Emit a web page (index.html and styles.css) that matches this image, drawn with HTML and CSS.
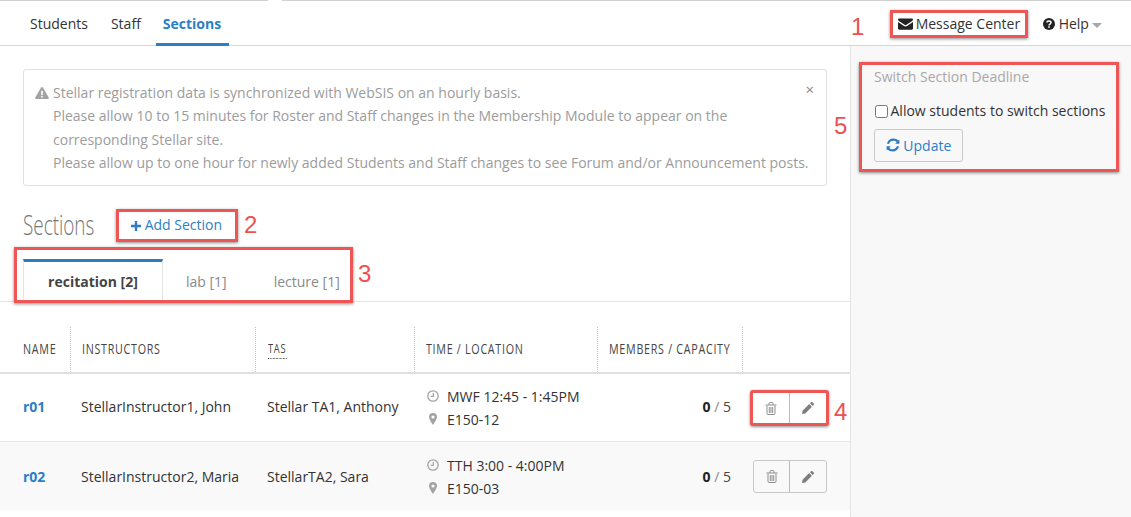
FILE: index.html
```html
<!DOCTYPE html>
<html lang="en">
<head>
<meta charset="utf-8">
<title>Sections</title>
<link rel="stylesheet" href="styles.css">
</head>
<body>
<div class="topline"><span class="gap"></span></div>
<header class="topbar">
  <nav class="nav">
    <a class="nav-item">Students</a>
    <a class="nav-item">Staff</a>
    <a class="nav-item active">Sections</a>
  </nav>
  <div class="nav-right">
    <span class="num">1</span>
    <a class="msg marked">
      <svg class="ico" viewBox="0 0 16 12" width="15" height="12"><path fill="#222" d="M0 1.2C0 .5.6 0 1.3 0h13.4c.7 0 1.3.5 1.3 1.2 0 .6-.4 1.1-.9 1.5L9 6.9c-.6.4-1.4.4-2 0L.9 2.7C.4 2.3 0 1.8 0 1.2zM0 3.9l6.4 4.3c1 .6 2.2.6 3.2 0L16 3.9v6.8c0 .7-.6 1.3-1.3 1.3H1.3C.6 12 0 11.4 0 10.7z"/></svg>
      Message Center
    </a>
    <a class="help">
      <svg class="ico" viewBox="0 0 12 12" width="12" height="12"><circle cx="6" cy="6" r="6" fill="#222"/><path fill="none" stroke="#fff" stroke-width="1.5" d="M4 4.6C4 3.5 4.9 3 6 3s2 .6 2 1.6c0 1.500-2 1.400-2 2.900"/><rect x="5.200" y="8.300" width="1.600" height="1.500" fill="#fff"/></svg>
      Help<span class="caret"></span>
    </a>
  </div>
</header>
<div class="layout">
  <main class="content">
    <div class="alert">
      <span class="close">×</span>
      <svg class="warn" viewBox="0 0 14 12" width="14" height="12"><path fill="#a3a3a3" d="M7 0c.4 0 .7.2.9.5l6 10.200c.3.600-.1 1.300-.9 1.300H1c-.8 0-1.200-.7-.9-1.300L6.100.5C6.300.2 6.600 0 7 0z"/><rect x="6.200" y="3.800" width="1.600" height="4.200" fill="#fff"/><rect x="6.200" y="8.900" width="1.600" height="1.600" fill="#fff"/></svg>
      <p>Stellar registration data is synchronized with WebSIS on an hourly basis.</p>
      <p>Please allow 10 to 15 minutes for Roster and Staff changes in the Membership Module to appear on the corresponding Stellar site.</p>
      <p>Please allow up to one hour for newly added Students and Staff changes to see Forum and/or Announcement posts.</p>
    </div>
    <div class="heading">
      <h1>Sections</h1>
      <a class="add marked">
        <svg class="ico" viewBox="0 0 10 10" width="10" height="10"><path fill="#2b7cc4" d="M3.800 0h2.400v3.800H10v2.400H6.200V10H3.800V6.200H0V3.800h3.800z"/></svg>
        Add Section
      </a>
      <span class="num num2">2</span>
    </div>
    <div class="tabs">
      <div class="tabs-mark">
        <a class="tab active">recitation [2]</a>
        <a class="tab lab">lab [1]</a>
        <a class="tab lecture">lecture [1]</a>
      </div>
      <span class="num num3">3</span>
    </div>
    <table class="grid">
      <colgroup><col class="c1"><col class="c2"><col class="c3"><col class="c4"><col class="c5"><col class="c6"></colgroup>
      <thead>
        <tr>
          <th class="first"><span class="narrow">NAME</span></th>
          <th class="col2"><span class="narrow">INSTRUCTORS</span></th>
          <th class="col3"><span class="narrow abbr">TAS</span></th>
          <th class="col4"><span class="narrow">TIME / LOCATION</span></th>
          <th class="col5"><span class="narrow">MEMBERS / CAPACITY</span></th>
          <th></th>
        </tr>
      </thead>
      <tbody>
        <tr>
          <td class="first"><a class="link">r01</a></td>
          <td class="col2">StellarInstructor1, John</td>
          <td class="col3">Stellar TA1, Anthony</td>
          <td class="col4">
            <div class="tl"><svg class="clock" viewBox="0 0 12 12" width="12" height="12"><circle cx="6" cy="6" r="5.200" fill="none" stroke="#a3a3a3" stroke-width="1.300"/><path fill="none" stroke="#a3a3a3" stroke-width="1.200" d="M6.300 3v3.400H3.700"/></svg>MWF 12:45 - 1:45PM</div>
            <div class="tl"><svg class="pin" viewBox="0 0 8 12" width="8" height="12"><path fill="#a3a3a3" fill-rule="evenodd" d="M4 0a4 4 0 0 1 4 4c0 1.600-2.400 5.800-4 8C2.400 9.800 0 5.600 0 4a4 4 0 0 1 4-4zm0 2.400a1.600 1.600 0 1 0 0 3.200 1.600 1.600 0 0 0 0-3.200z"/></svg>E150-12</div>
          </td>
          <td class="cap"><b>0</b> <i>/</i> 5</td>
          <td class="acts">
            <div class="btns marked">
              <a class="btn"><svg viewBox="0 0 12 13" width="12" height="13"><path fill="none" stroke="#8f8f8f" d="M2 3.500v8c0 .6.400 1 1 1h6c.6 0 1-.4 1-1v-8M.5 3h11M4 3V1.500c0-.5.300-1 1-1h2c.7 0 1 .500 1 1V3M4.300 5v6M6 5v6M7.700 5v6"/></svg></a>
              <a class="btn"><svg viewBox="0 0 12 12" width="12" height="12"><path fill="#7d7d7d" d="M9 .3c.4-.4 1-.4 1.400 0l1.300 1.300c.4.400.4 1 0 1.400l-1 1L8 1.300zM7.200 2.100L9.900 4.800 3.300 11.400 0 12l.6-3.300z"/></svg></a>
            </div>
            <span class="num num4">4</span>
          </td>
        </tr>
        <tr class="alt">
          <td class="first"><a class="link">r02</a></td>
          <td class="col2">StellarInstructor2, Maria</td>
          <td class="col3">StellarTA2, Sara</td>
          <td class="col4">
            <div class="tl"><svg class="clock" viewBox="0 0 12 12" width="12" height="12"><circle cx="6" cy="6" r="5.200" fill="none" stroke="#a3a3a3" stroke-width="1.300"/><path fill="none" stroke="#a3a3a3" stroke-width="1.200" d="M6.300 3v3.400H3.700"/></svg>TTH 3:00 - 4:00PM</div>
            <div class="tl"><svg class="pin" viewBox="0 0 8 12" width="8" height="12"><path fill="#a3a3a3" fill-rule="evenodd" d="M4 0a4 4 0 0 1 4 4c0 1.600-2.400 5.800-4 8C2.400 9.800 0 5.600 0 4a4 4 0 0 1 4-4zm0 2.400a1.600 1.600 0 1 0 0 3.200 1.600 1.600 0 0 0 0-3.200z"/></svg>E150-03</div>
          </td>
          <td class="cap"><b>0</b> <i>/</i> 5</td>
          <td class="acts">
            <div class="btns outlined">
              <a class="btn"><svg viewBox="0 0 12 13" width="12" height="13"><path fill="none" stroke="#8f8f8f" d="M2 3.500v8c0 .6.400 1 1 1h6c.6 0 1-.4 1-1v-8M.5 3h11M4 3V1.500c0-.5.300-1 1-1h2c.7 0 1 .500 1 1V3M4.300 5v6M6 5v6M7.700 5v6"/></svg></a>
              <a class="btn"><svg viewBox="0 0 12 12" width="12" height="12"><path fill="#7d7d7d" d="M9 .3c.4-.4 1-.4 1.400 0l1.300 1.300c.4.400.4 1 0 1.400l-1 1L8 1.300zM7.200 2.100L9.900 4.800 3.300 11.400 0 12l.6-3.300z"/></svg></a>
            </div>
          </td>
        </tr>
      </tbody>
    </table>
  </main>
  <aside class="side">
    <span class="num num5">5</span>
    <div class="panel marked">
      <h2>Switch Section Deadline</h2>
      <label class="check"><input type="checkbox"> Allow students to switch sections</label>
      <button class="update" type="button">
        <svg class="ico" viewBox="0 0 14 14" width="14" height="14"><path fill="#2b7cc4" d="M13.400 5.700H9.200l1.600-1.600C9.900 3.300 8.700 2.800 7.300 2.800c-2 0-3.700 1.200-4.300 3.100L.9 5.400C1.800 2.300 4.400.4 7.300.4c2.100 0 3.900.8 5.200 2L13.400 1.500zM.6 8.300h4.200L3.200 9.900c.9.800 2.100 1.300 3.500 1.300 2 0 3.700-1.200 4.300-3.100l2.100.5c-.9 3.100-3.500 5-6.400 5-2.100 0-3.900-.8-5.200-2L.6 12.500z"/></svg>
        Update
      </button>
    </div>
  </aside>
</div>
</body>
</html>
```
FILE: styles.css
```css
* { box-sizing: border-box; }
html, body { margin: 0; padding: 0; }
body {
  width: 1131px;
  height: 517px;
  overflow: hidden;
  background: #fff;
  color: #333;
  font-family: "Open Sans", "Liberation Sans", sans-serif;
  font-size: 14px;
  line-height: 20px;
}
a { color: inherit; text-decoration: none; }

.topline { height: 1px; background: #d0d0d0; display: flex; padding-left: 268px; }
.gap { width: 14px; background: #fff; }

.topbar {
  height: 45px;
  border-bottom: 1px solid #d6d6d6;
  display: flex;
  justify-content: space-between;
  padding-left: 19px;
}
.nav { display: flex; height: 45px; }
.nav-item { padding: 13px 11px 0; height: 45px; color: #333; }
.nav-item:first-child { padding-right: 12px; }
.nav-item.active { color: #2b7fc7; font-weight: 700; border-bottom: 3px solid #2b7fc7; padding: 13px 8px 0 7px; margin-left: 4px; }

.nav-right { display: flex; align-items: flex-start; position: relative; width: 300px; }
.ico { vertical-align: -1px; }
.msg { position: absolute; left: 59px; top: 9px; width: 138px; height: 28px; padding: 1px 0 0 5px; white-space: nowrap; }
.msg .ico { margin-right: -1px; }
.help { position: absolute; left: 212px; top: 13px; white-space: nowrap; }
.caret {
  display: inline-block;
  margin-left: 3px;
  vertical-align: 1px;
  border: 5px solid transparent;
  border-top-color: #a8a8a8;
  border-bottom-width: 0;
}

.marked { border: 3px solid #ee5555; box-shadow: 0 1px 3px rgba(0,0,0,.45); }
.num {
  position: absolute;
  color: #ee5050;
  font-family: "Liberation Sans", sans-serif;
  font-size: 24px;
  line-height: 24px;
}
.nav-right > .num { left: 20px; top: 14px; }

.layout { display: flex; height: 471px; }
.content { width: 851px; border-right: 1px solid #e4e4e4; position: relative; }

.alert {
  position: relative;
  margin: 23px 23px 0 23px;
  height: 117px;
  padding: 11px 16px 0 29px;
  border: 1px solid #e0e0e0;
  border-radius: 3px;
  color: #9c9c9c;
  line-height: 23.400px;
}
.alert p { margin: 0; }
.warn { position: absolute; left: 11px; top: 17px; }
.close { position: absolute; right: 12px; top: 8px; font-size: 15px; color: #888; }

.heading { position: relative; height: 73px; padding-top: 22px; }
.heading h1 {
  display: inline-block;
  margin: 0 0 0 23px;
  font-weight: 300;
  font-size: 27px;
  line-height: 34px;
  color: #777;
  transform: scaleX(.7);
  transform-origin: left center;
}
.add {
  position: absolute;
  left: 116px;
  top: 23px;
  width: 122px;
  height: 33px;
  padding: 3px 0 0 12px;
  color: #2b7fc7;
  white-space: nowrap;
}
.num2 { left: 244px; top: 27px; }

.tabs { position: relative; height: 43px; border-bottom: 1px solid #e4e4e4; padding-left: 23px; }
.tabs-mark { display: flex; height: 43px; }
.tab { padding-top: 13px; color: #8a8a8a; white-space: nowrap; }
.tab.active {
  width: 140px;
  height: 43px;
  border: 1px solid #e4e4e4;
  border-top: 3px solid #2e7cc0;
  border-bottom: 1px solid #fff;
  text-align: center;
  font-weight: 700;
  color: #444;
  padding-top: 10px;
}
.tab.lab { margin-left: 23px; }
.tab.lecture { margin-left: 47px; }
.tabs-mark::after {
  content: "";
  position: absolute;
  left: 14px;
  top: -12px;
  width: 333px;
  height: 50px;
  border: 3px solid #ee5555;
  box-shadow: 0 1px 3px rgba(0,0,0,.45);
}
.num3 { left: 358px; top: 3px; }

.grid { width: 850px; border-collapse: collapse; table-layout: fixed; margin-top: 25px; }
.c1 { width: 70px; } .c2 { width: 185px; } .c3 { width: 159px; } .c4 { width: 183px; } .c5 { width: 145px; } .c6 { width: 108px; }
.grid th {
  height: 46px;
  padding: 0 0 4px 12px;
  text-align: left;
  font-weight: 400;
  font-size: 15px;
  letter-spacing: 1px;
  color: #444;
  border-left: 1px dotted #c4c4c4;
  border-bottom: 2px solid #e0e0e0;
  white-space: nowrap;
}
.narrow { display: inline-block; transform: scaleX(.715); transform-origin: left center; }
.grid th.first, .grid td.first { border-left: 0; padding-left: 23px; }
.grid th.col2, .grid td.col2 { padding-left: 11px; }
.grid th.col4 { padding-left: 11px; }
.grid th.col5 { padding-left: 11px; }
.grid td.col4 { padding-left: 13px; padding-top: 1px; }
.abbr { border-bottom: 1px dotted #222; font-size: 13px; }
.grid td { height: 68px; padding: 0 0 0 12px; border-bottom: 1px solid #e8e8e8; color: #333; white-space: nowrap; }
.grid td.acts { padding-top: 2px; }
.grid tr.alt td { height: 69px; background: #f9f9f9; border-bottom: 0; padding-top: 2px; }
.link { color: #2b7fc7; font-weight: 700; }
.tl { display: flex; align-items: center; line-height: 23px; }
.clock { margin-right: 8px; }
.pin { margin: 0 10px 0 2px; }
.grid td.cap { text-align: right; padding-right: 11px; color: #444; }
.cap i { font-style: normal; color: #888; }
.cap b { color: #222; }
.grid td.acts { position: relative; padding-left: 8px; }
.btns { display: flex; height: 33px; border-radius: 3px; background: #fff; }
.btns.marked { width: 79px; height: 36px; margin-left: 0; }
.btns.outlined { width: 74px; margin-left: 3px; border: 1px solid #c8c8c8; background: transparent; }
.btn { flex: 1; display: flex; align-items: center; justify-content: center; }
.btn + .btn { border-left: 1px solid #bbb; }
.btns.outlined .btn:first-child { flex: 0 0 35px; }
.num4 { left: 92px; top: 26px; }

.side { flex: 1; background: #f8f8f8; position: relative; }
.num5 { left: -17px; top: 68px; }
.panel { margin: 16px 0 0 8px; width: 260px; height: 110px; padding: 2px 0 0 12px; }
.panel h2 { margin: 0; font-size: 14px; font-weight: 400; color: #a8a8a8; line-height: 20px; }
.check { display: flex; align-items: center; margin-top: 14px; color: #333; white-space: nowrap; }
.check input { margin: 1px 2.500px 0 1px; width: 13px; height: 13px; }
.update {
  margin-top: 8px;
  width: 89px;
  height: 33px;
  padding: 0;
  font: inherit;
  color: #2b7fc7;
  background: transparent;
  border: 1px solid #c8c8c8;
  border-radius: 3px;
}
```
